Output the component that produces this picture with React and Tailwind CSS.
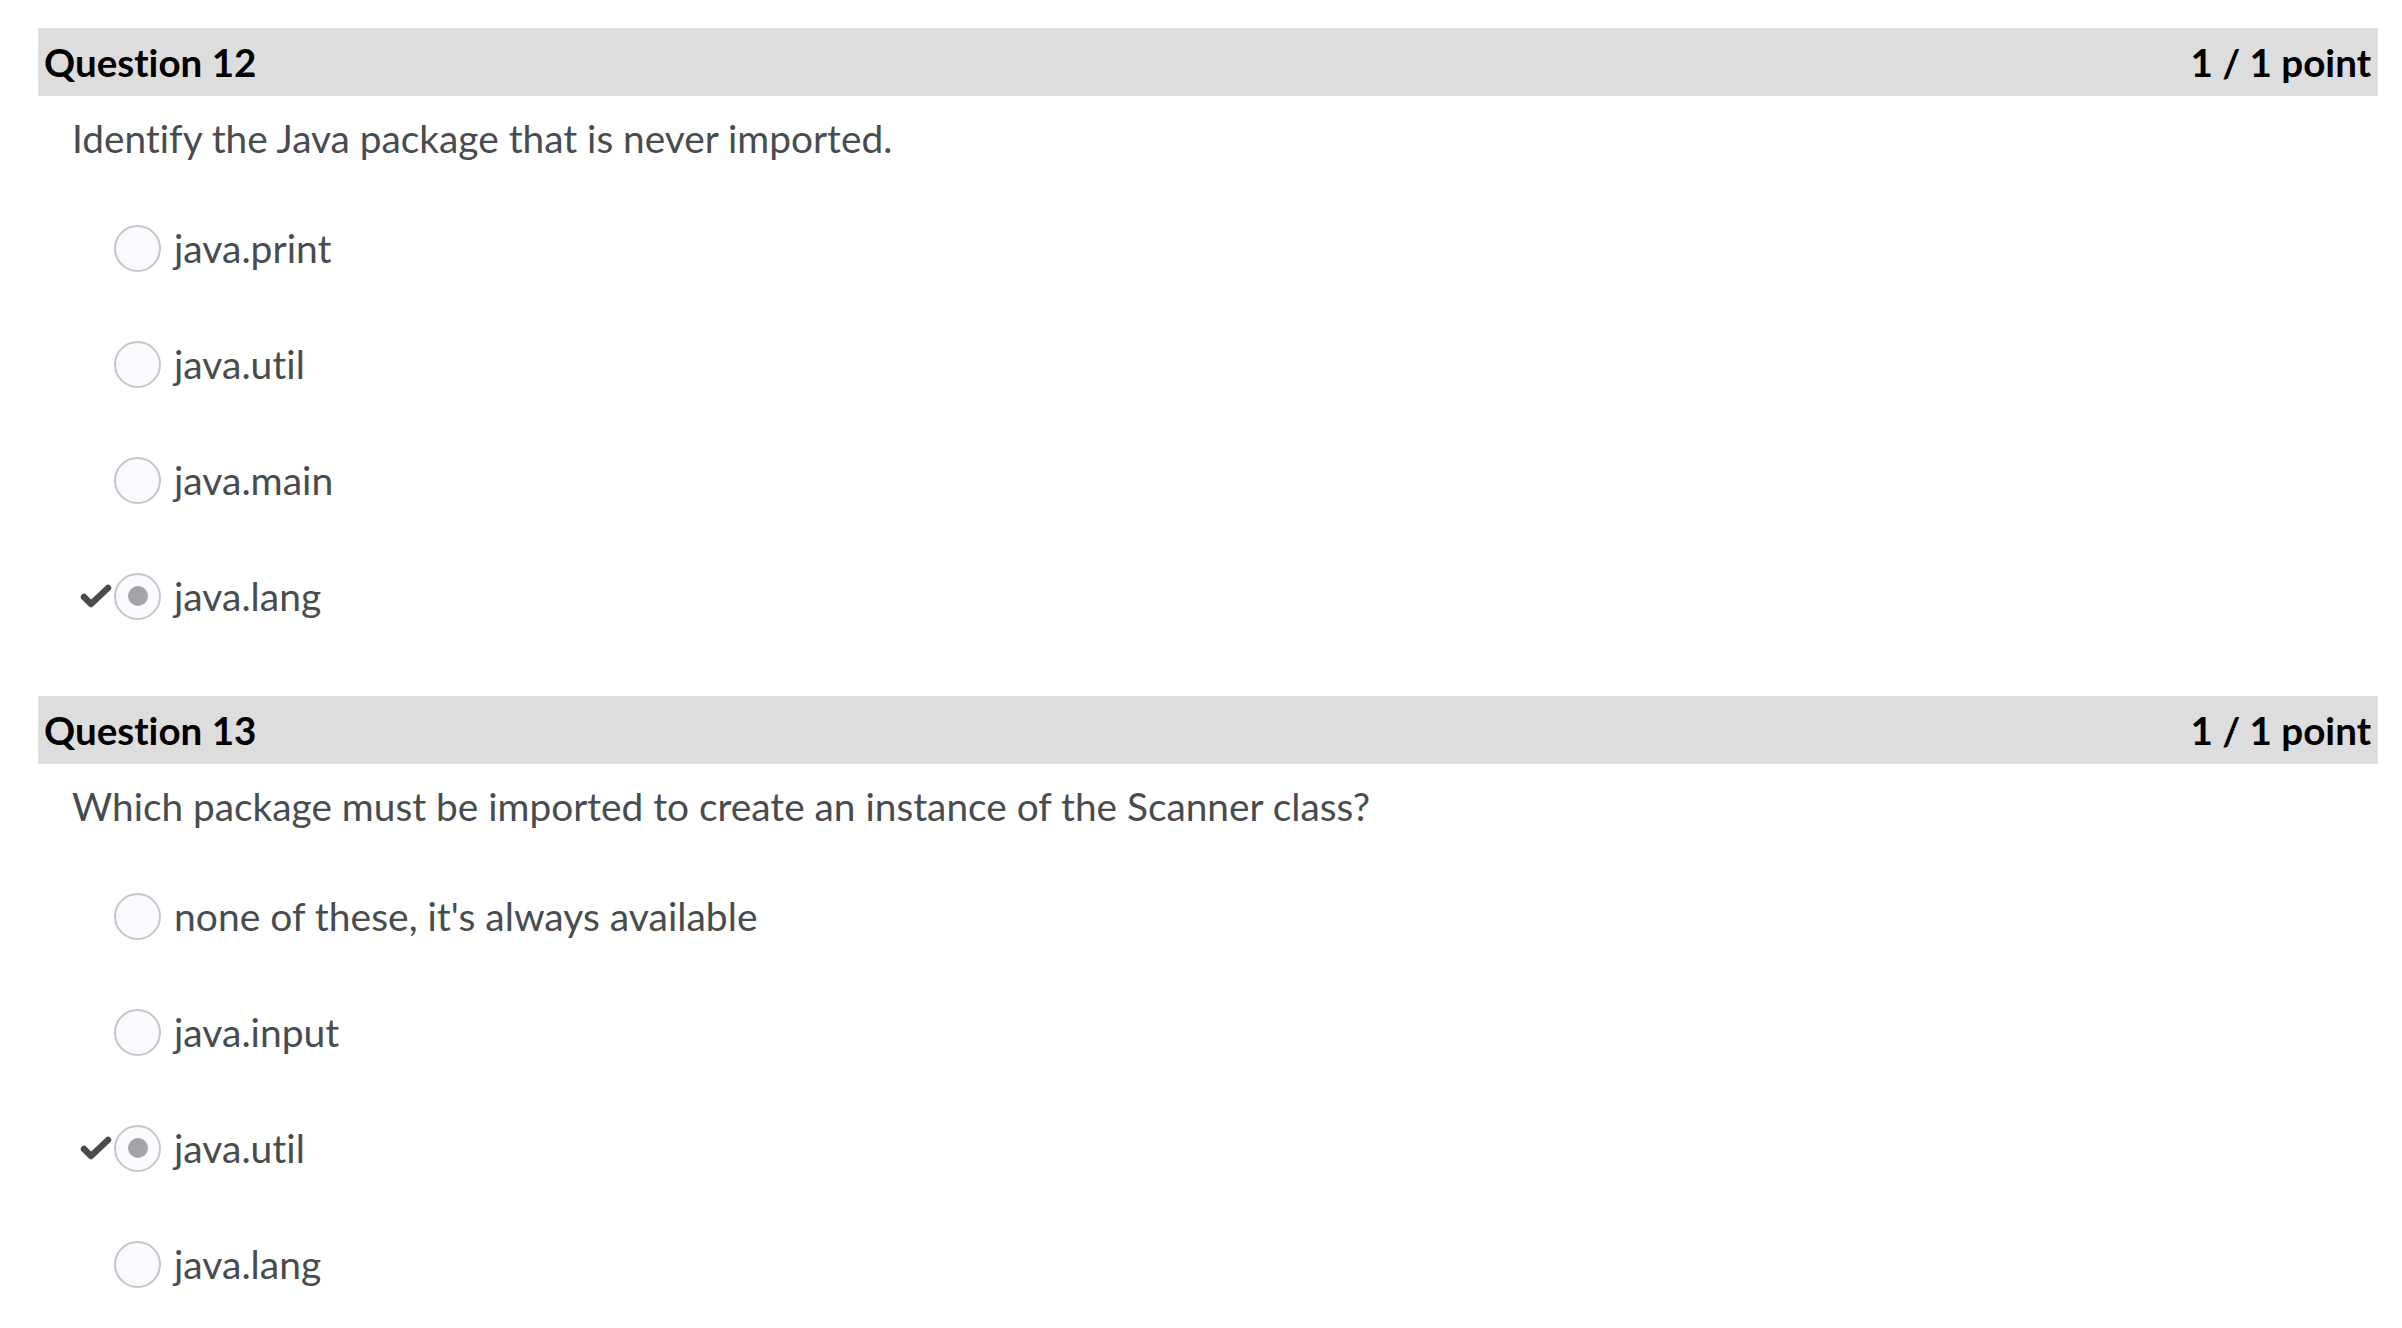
import React from 'react';

const questions = [
    {
        number: 12,
        score: '1 / 1 point',
        text: 'Identify the Java package that is never imported.',
        options: ['java.print', 'java.util', 'java.main', 'java.lang'],
        answer: 3,
    },
    {
        number: 13,
        score: '1 / 1 point',
        text: 'Which package must be imported to create an instance of the Scanner class?',
        options: ["none of these, it's always available", 'java.input', 'java.util', 'java.lang'],
        answer: 2,
    },
];

const Check = () => (
    <svg width="32" height="24" viewBox="0 0 32 24" fill="none">
        <path d="M4 13 L11 20 L28 4" stroke="#494c4e" strokeWidth="6.5" strokeLinecap="round" strokeLinejoin="round" />
    </svg>
);

const Radio = ({ checked }) => (
    <div className="w-[47px] h-[47px] shrink-0 rounded-full border-2 border-[#c4c6c8] bg-[#f9fbff] flex items-center justify-center">
        {checked && <div className="w-[20px] h-[20px] rounded-full bg-[#a2a4a6]"></div>}
    </div>
);

const Question = ({ q }) => (
    <div className="mb-[42px]">
        {/* Header */}
        <div className="h-[68px] bg-[#dddddd] flex items-center justify-between pl-[6px] pr-[7px]">
            <span className="text-[38.6px] font-bold text-black leading-none">Question {q.number}</span>
            <span className="text-[38.6px] font-bold text-black leading-none">{q.score}</span>
        </div>

        {/* Prompt */}
        <p className="mt-[14px] pl-[34px] text-[38.8px] leading-[57px] text-[#494c4e]">{q.text}</p>

        {/* Options */}
        <ul className="mt-[23px]">
            {q.options.map((opt, i) => (
                <li key={i} className="h-[116px] flex items-center">
                    <div className="w-[76px] shrink-0 flex justify-end pr-[2px]">
                        {q.answer === i && <Check />}
                    </div>
                    <Radio checked={q.answer === i} />
                    <span className="ml-[13px] text-[39px] text-[#494c4e] leading-none">{opt}</span>
                </li>
            ))}
        </ul>
    </div>
);

export default function App() {
    return (
        <div className="min-h-screen bg-white pl-[38px] pr-[24px] pt-[28px] font-['Lato','Liberation_Sans',sans-serif] [font-variant-ligatures:none]">
            {questions.map((q) => (
                <Question key={q.number} q={q} />
            ))}
        </div>
    );
}
